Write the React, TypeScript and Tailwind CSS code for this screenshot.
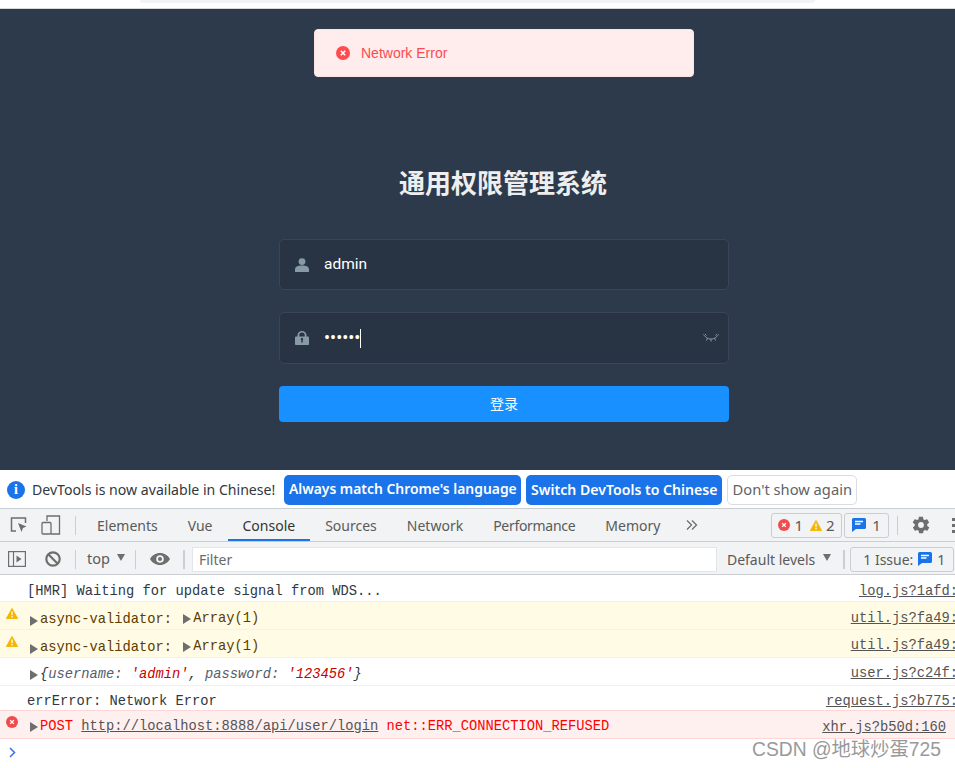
const ui = "font-['Noto_Sans',sans-serif]";

const ErrorDot = ({ className = '', fill = '#f14c4c' }: { className?: string; fill?: string }) => (
  <svg viewBox="0 0 14 14" className={className}>
    <circle cx="7" cy="7" r="7" fill={fill} />
    <path d="M4.8 4.8l4.4 4.4M9.2 4.8l-4.4 4.4" stroke="#fff" strokeWidth="1.6" />
  </svg>
);

const WarnIcon = ({ className = '' }: { className?: string }) => (
  <svg viewBox="0 0 14 13" className={className}>
    <path d="M7 .5L13.8 12.6H.2z" fill="#f4b400" stroke="#f4b400" strokeLinejoin="round" />
    <path d="M7 4.2v4.4M7 9.6v1.5" stroke="#fff" strokeWidth="1.5" />
  </svg>
);

const MessageIcon = ({ className = '' }: { className?: string }) => (
  <svg viewBox="0 0 14 14" className={className}>
    <path d="M1.5 0h11A1.5 1.5 0 0 1 14 1.5v8a1.5 1.5 0 0 1-1.5 1.5H4l-4 3V1.5A1.5 1.5 0 0 1 1.5 0z" fill="#1a73e8" />
    <path d="M3 3.5h8M3 6h5.5" stroke="#fff" strokeWidth="1.3" />
  </svg>
);

const Caret = ({ className = '' }: { className?: string }) => (
  <svg viewBox="0 0 8 10" className={`h-[10px] w-[8px] shrink-0 ${className}`}>
    <path d="M0 0l8 5-8 5z" fill="#6e6e6e" />
  </svg>
);

const LoginPage = () => (
  <div className="relative flex h-[461px] justify-center bg-[#2d3a4b] pl-[53px] pt-[155px]">
    <div className="absolute left-[314px] top-[20px] flex h-[48px] w-[380px] items-center gap-[11px] rounded border border-[#fde2e2] bg-[#ffecec] px-[21px]">
      <ErrorDot className="h-[14px] w-[14px]" fill="#ff4d4f" />
      <span className="font-['Liberation_Sans',sans-serif] text-[14px] text-[#fa4b50]">Network Error</span>
    </div>
    <div className="w-[450px]">
      <h1 className="mb-[39px] pr-[2px] text-center font-['Noto_Sans_CJK_SC',sans-serif] text-[26px] font-bold leading-[36px] text-[#eeeeee]">
        通用权限管理系统
      </h1>
      <div className="mb-[22px] flex h-[51px] items-center rounded-[5px] border border-[#3a4657] bg-[#283443] pl-[15px]">
        <svg viewBox="0 0 14 14" className="h-[14px] w-[14px]" fill="#889aa4">
          <circle cx="7" cy="3.6" r="3.4" />
          <path d="M0 14v-2.5C0 9 2.5 7.6 7 7.6s7 1.4 7 3.9V14z" />
        </svg>
        <span className="ml-[15px] font-['Roboto',sans-serif] text-[15.5px] text-white">admin</span>
      </div>
      <div className="mb-[22px] flex h-[52px] items-center rounded-[5px] border border-[#3a4657] bg-[#283443] pl-[15px] pr-[9px]">
        <svg viewBox="0 0 14 14" className="h-[14px] w-[14px]" fill="#889aa4">
          <path d="M1.2 5.6h1.3V4.2a4.5 4.2 0 0 1 9 0v1.4h1.3c.7 0 1.2.5 1.2 1.1v6.2c0 .6-.5 1.1-1.2 1.1H1.2C.5 14 0 13.5 0 12.9V6.7c0-.6.5-1.1 1.2-1.1zM4.3 5.6h5.4V4.2a2.7 2.6 0 0 0-5.4 0zM6.3 9v2.4h1.4V9a1.2 1.2 0 1 0-1.4 0z" fillRule="evenodd" />
        </svg>
        <span className="ml-[15px] font-['Roboto',sans-serif] text-[18px] leading-none text-white">••••••</span>
        <span className="h-[19px] w-px bg-white" />
        <svg viewBox="0 0 16 10" className="ml-auto h-[10px] w-[16px]" fill="none" stroke="#889aa4" strokeWidth="1">
          <path d="M.5 1.5C3 5 5.5 6 8 6s5-1 7.5-4.5M2 1l1.500 1.500M14 1l-1.500 1.500M4.500 5L3.500 7.500M11.500 5l1 2.500M8 6v2.500" />
        </svg>
      </div>
      <button className="flex h-[36px] w-full items-center justify-center rounded bg-[#1890ff] pb-[2px] font-['Noto_Sans_CJK_SC',sans-serif] text-[14px] text-white">
        登录
      </button>
    </div>
  </div>
);

const InfoBar = () => (
  <div className={`flex h-[38px] items-center bg-white pl-[7px] pt-[1px] ${ui} text-[14.1px]`}>
    <span className="flex h-[18px] w-[18px] items-center justify-center rounded-full bg-[#1a73e8] font-['Liberation_Serif',serif] text-[14px] font-bold text-white">
      i
    </span>
    <span className="ml-[7px] text-[#303942]">DevTools is now available in Chinese!</span>
    <button className="ml-[9px] h-[30px] w-[237px] rounded-[5px] bg-[#1a73e8] text-[13.9px] font-semibold text-white">
      Always match Chrome's language
    </button>
    <button className="ml-[5px] h-[30px] w-[196px] rounded-[5px] bg-[#1a73e8] text-[14.1px] font-semibold text-white">
      Switch DevTools to Chinese
    </button>
    <button className="ml-[5px] h-[30px] w-[130px] rounded-[5px] border border-[#dadce0] bg-white text-[14.7px] text-[#5f6368]">
      Don't show again
    </button>
  </div>
);

const tabs = ['Elements', 'Vue', 'Console', 'Sources', 'Network', 'Performance', 'Memory'];

const TabBar = () => (
  <div className={`flex h-[34px] items-stretch border-y border-[#cacdd1] bg-[#f1f3f4] ${ui} text-[14px] text-[#5a5a5a]`}>
    <div className="flex items-center gap-[13px] pl-[10px]">
      <svg viewBox="0 0 18 18" className="h-[18px] w-[18px]" fill="none" stroke="#6e6e6e" strokeWidth="1.5">
        <path d="M6 15H1.500V2h14v5" />
        <path d="M8 7l8.500 3.500-3.500 1.500-1.500 4z" fill="#6e6e6e" stroke="none" />
      </svg>
      <svg viewBox="0 0 20 20" className="h-[20px] w-[20px]" fill="none" stroke="#6e6e6e" strokeWidth="1.3">
        <path d="M6 6V1h12.500v18H10" />
        <rect x="1" y="7.5" width="9" height="11.5" rx="1" />
      </svg>
      <span className="ml-[1px] h-[19px] w-px bg-[#cacdd1]" />
    </div>
    <div className="ml-[6px] flex">
      {tabs.map(tab => (
        <div
          key={tab}
          className={`flex items-center px-[15px] ${tab === 'Console' ? 'border-b-2 border-[#1a73e8] pt-[2px] text-[#333333]' : ''} ${tab === 'Performance' ? 'tracking-[-0.3px]' : ''}`}
        >
          {tab}
        </div>
      ))}
    </div>
    <svg viewBox="0 0 12 10" className="ml-[11px] h-[10px] w-[12px] self-center" fill="none" stroke="#6e6e6e" strokeWidth="1.3">
      <path d="M1 .5L5.500 5 1 9.500M6 .5L10.500 5 6 9.500" />
    </svg>
    <div className="ml-auto flex items-center">
      <div className="flex h-[25px] w-[71px] items-center justify-center gap-[4px] rounded-[3px] border border-[#cacdd1] text-[15px] text-[#5a5a5a]">
        <ErrorDot className="h-[12px] w-[12px]" />
        <span>1</span>
        <WarnIcon className="ml-[3px] h-[11px] w-[12px]" />
        <span>2</span>
      </div>
      <div className="ml-[2px] flex h-[25px] w-[45px] items-center justify-center gap-[6px] rounded-[3px] border border-[#cacdd1] text-[15px]">
        <MessageIcon className="h-[14px] w-[14px]" />
        <span>1</span>
      </div>
      <span className="ml-[8px] h-[19px] w-px bg-[#cacdd1]" />
      <svg viewBox="0 0 24 24" className="ml-[13px] h-[20px] w-[20px]" fill="#6e6e6e">
        <path fillRule="evenodd" d="M19.4 13c.1-.3.1-.7.1-1s0-.7-.1-1l2.100-1.600c.2-.1.2-.4.1-.6l-2-3.500c-.1-.2-.4-.3-.6-.2l-2.500 1c-.5-.4-1.100-.7-1.700-1l-.4-2.600c0-.3-.2-.4-.5-.4h-4c-.3 0-.5.2-.5.4l-.4 2.600c-.6.3-1.200.6-1.700 1l-2.500-1c-.2-.1-.5 0-.6.2l-2 3.500c-.1.200-.1.500.1.600L4.600 11c-.1.300-.1.700-.1 1s0 .7.1 1l-2.100 1.600c-.2.100-.2.400-.1.600l2 3.500c.1.200.4.300.6.200l2.500-1c.5.400 1.100.7 1.700 1l.4 2.600c0 .3.200.4.500.4h4c.300 0 .5-.2.5-.4l.4-2.600c.6-.3 1.200-.6 1.700-1l2.500 1c.2.100.5 0 .6-.2l2-3.500c.1-.2.100-.5-.1-.6zM12 15.500a3.500 3.500 0 1 1 0-7 3.500 3.500 0 0 1 0 7z" />
      </svg>
      <div className="ml-[21px] flex w-[3px] flex-col gap-[3px]">
        <span className="h-[3px] w-[3px] bg-[#6e6e6e]" />
        <span className="h-[3px] w-[3px] bg-[#6e6e6e]" />
        <span className="h-[3px] w-[3px] bg-[#6e6e6e]" />
      </div>
    </div>
  </div>
);

const Toolbar = () => (
  <div className={`flex h-[33px] items-center whitespace-nowrap border-b border-[#cacdd1] bg-[#f1f3f4] pl-[8px] pt-[2px] ${ui} text-[14px] text-[#5a5a5a]`}>
    <svg viewBox="0 0 18 16" className="h-[16px] w-[18px] shrink-0" fill="none" stroke="#6e6e6e" strokeWidth="1.2">
      <rect x=".6" y=".6" width="16.8" height="14.8" />
      <path d="M5.500 .6v14.800" />
      <path d="M8.500 4.500l5 3.500-5 3.500z" fill="#6e6e6e" stroke="none" />
    </svg>
    <svg viewBox="0 0 16 16" className="ml-[19px] h-[16px] w-[16px] shrink-0" fill="none" stroke="#6e6e6e" strokeWidth="2.2">
      <circle cx="8" cy="8" r="6.7" />
      <path d="M3.300 3.300l9.400 9.400" />
    </svg>
    <span className="ml-[14px] h-[19px] w-px bg-[#cacdd1]" />
    <span className="ml-[11px] text-[14.5px]">top</span>
    <span className="ml-[7px] mb-[3px] h-0 w-0 border-x-[4px] border-t-[7px] border-x-transparent border-t-[#6e6e6e]" />
    <span className="ml-[10px] h-[19px] w-px bg-[#cacdd1]" />
    <svg viewBox="0 0 20 14" className="ml-[14px] h-[14px] w-[20px] shrink-0" fill="#6e6e6e">
      <path fillRule="evenodd" d="M10 1C5.500 1 2 3.500 0 7c2 3.500 5.500 6 10 6s8-2.500 10-6c-2-3.500-5.500-6-10-6zm0 9.800A3.800 3.800 0 1 1 10 3.200a3.800 3.800 0 0 1 0 7.600zM10 5a2 2 0 1 0 0 4 2 2 0 0 0 0-4z" />
    </svg>
    <span className="ml-[13px] h-[19px] w-[2px] bg-[#cacdd1]" />
    <div className="ml-[7px] flex h-[25px] w-[525px] shrink-0 items-center border border-[#e3e5e7] bg-white pl-[6px] text-[#6a6a6a]">Filter</div>
    <span className="ml-[10px] shrink-0">Default levels</span>
    <span className="ml-[8px] mb-[3px] h-0 w-0 shrink-0 border-x-[4px] border-t-[7px] border-x-transparent border-t-[#6e6e6e]" />
    <span className="ml-[12px] h-[19px] w-[2px] shrink-0 bg-[#cacdd1]" />
    <div className="ml-[5px] flex h-[25px] w-[104px] shrink-0 items-center gap-[5px] rounded-[3px] border border-[#cacdd1] pl-[12px]">
      <span>1 Issue:</span>
      <MessageIcon className="h-[14px] w-[14px]" />
      <span>1</span>
    </div>
  </div>
);

const Row = ({ className = '', source, sourceClass = '', icon, children }: {
  className?: string;
  source: string;
  sourceClass?: string;
  icon?: React.ReactNode;
  children: React.ReactNode;
}) => (
  <div className={`relative flex items-start justify-between border-b pl-[27px] ${className}`}>
    {icon}
    <div className="flex items-center whitespace-pre">{children}</div>
    <span className={`text-[#545454] underline ${sourceClass}`}>{source}</span>
  </div>
);

const ValidatorLine = () => (
  <>
    <Caret className="ml-[3px] mr-[2px] mt-[2px]" />
    <span className="text-[#5c3c00]">async-validator: </span>
    <Caret className="ml-[3px] mr-[2px] mb-[2px]" />
    <span className="mb-[2px] text-[#5c3c00]">Array(1)</span>
  </>
);

const ConsoleRows = () => (
  <div className="font-['Liberation_Mono',monospace] text-[13.75px] leading-[18px] text-[#303942]">
    <Row className="h-[27px] border-[#fff5c2] pt-[8px]" source="log.js?1afd:" sourceClass="-mr-[3px]">
      [HMR] Waiting for update signal from WDS...
    </Row>
    <Row
      className="h-[28px] border-[#fff5c2] bg-[#fffbe5] pt-[8px]"
      source="util.js?fa49:"
      sourceClass="-mr-[3px]"
      icon={<WarnIcon className="absolute left-[6px] top-[6px] h-[11px] w-[12px]" />}
    >
      <ValidatorLine />
    </Row>
    <Row
      className="h-[28px] border-[#fff5c2] bg-[#fffbe5] pt-[8px]"
      source="util.js?fa49:"
      sourceClass="-mr-[3px] -mt-[1px]"
      icon={<WarnIcon className="absolute left-[6px] top-[6px] h-[11px] w-[12px]" />}
    >
      <ValidatorLine />
    </Row>
    <Row className="h-[28px] border-[#f0f0f0] pt-[8px]" source="user.js?c24f:" sourceClass="-mr-[3px] -mt-[1px]">
      <Caret className="ml-[3px] mr-[2px]" />
      <span className="italic">
        {'{'}<span className="text-[#565c6e]">username: </span>
        <span className="text-[#c80000]">'admin'</span>, <span className="text-[#565c6e]">password: </span>
        <span className="text-[#c80000]">'123456'</span>{'}'}
      </span>
    </Row>
    <Row className="h-[25px] border-[#ffd6d6] pt-[7px]" source="request.js?b775:" sourceClass="-mr-[3px]">
      errError: Network Error
    </Row>
    <Row
      className="h-[28px] border-[#ffd6d6] bg-[#fff0f0] pr-[9px] pt-[7px]"
      source="xhr.js?b50d:160"
      sourceClass="mt-[1px]"
      icon={<ErrorDot className="absolute left-[6px] top-[5px] h-[12px] w-[12px]" />}
    >
      <Caret className="ml-[3px] mr-[2px]" />
      <span className="text-[#ff0000]">POST </span>
      <span className="text-[#545454] underline">http://localhost:8888/api/user/login</span>
      <span className="text-[#ff0000]"> net::ERR_CONNECTION_REFUSED</span>
    </Row>
    <div className="pl-[9px] pt-[8px]">
      <svg viewBox="0 0 7 11" className="h-[11px] w-[7px]" fill="none" stroke="#3b78e7" strokeWidth="1.6">
        <path d="M1 1l4.500 4.500L1 10" />
      </svg>
    </div>
  </div>
);

export default function App() {
  return (
    <div className="relative h-[768px] w-[955px] overflow-hidden bg-white">
      <div className="h-[8px] bg-white">
        <div className="ml-[140px] mr-[140px] h-[3px] rounded-b-[8px] bg-[#f1f3f4]" />
      </div>
      <div className="h-px bg-[#d8d8d8]" />
      <LoginPage />
      <InfoBar />
      <TabBar />
      <Toolbar />
      <ConsoleRows />
      <div className="absolute left-[752px] top-[736px] font-['Liberation_Sans','Noto_Sans_CJK_SC',sans-serif] text-[19.3px] text-[#999999] [text-shadow:0_0_1px_#ffffff]">
        CSDN @地球炒蛋725
      </div>
    </div>
  );
}
